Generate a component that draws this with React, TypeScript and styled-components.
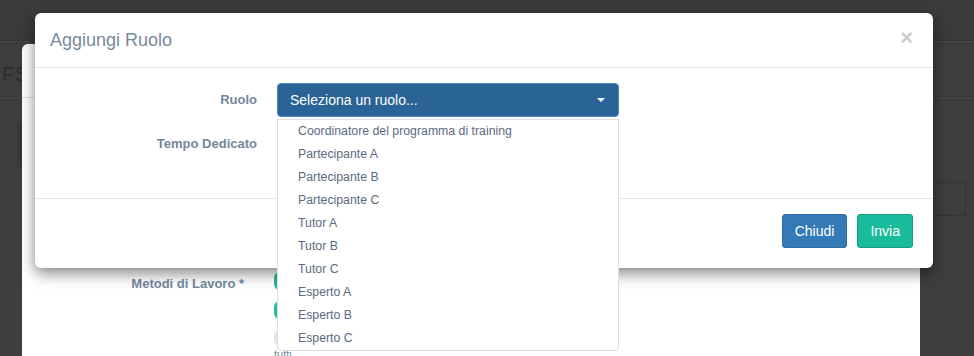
import React from "react";
import styled, { createGlobalStyle } from "styled-components";

const ruoli = [
  "Coordinatore del programma di training",
  "Partecipante A",
  "Partecipante B",
  "Partecipante C",
  "Tutor A",
  "Tutor B",
  "Tutor C",
  "Esperto A",
  "Esperto B",
  "Esperto C",
];

export default function App() {
  return (
    <>
      <GlobalStyle />
      <Stage>
        {/* pagina sotto il backdrop */}
        <PageTop />
        <PageTitleRow>
          <PageTitle>FSE</PageTitle>
        </PageTitleRow>
        <PageBlock>
          <SideBox />
          <RightBox />
        </PageBlock>
        <PageBottom />

        {/* modale dietro */}
        <BackModal>
          <BackHeader />
          <BackBody>
            <BackLabel>Metodi di Lavoro *</BackLabel>
            <PillList>
              <Pill $tone="green" />
              <Pill $tone="green" />
              <Pill $tone="grey" />
              <SmallText>tutti</SmallText>
            </PillList>
          </BackBody>
        </BackModal>

        {/* modale attivo */}
        <Modal>
          <ModalHeader>
            <ModalTitle>Aggiungi Ruolo</ModalTitle>
            <CloseButton>×</CloseButton>
          </ModalHeader>
          <ModalBody>
            <FormRow>
              <Label>Ruolo</Label>
              <SelectWrap>
                <SelectButton>
                  <span>Seleziona un ruolo...</span>
                  <Caret />
                </SelectButton>
                <Menu>
                  {ruoli.map((r) => (
                    <MenuItem key={r}>{r}</MenuItem>
                  ))}
                </Menu>
              </SelectWrap>
            </FormRow>
            <FormRow>
              <Label>Tempo Dedicato</Label>
            </FormRow>
          </ModalBody>
          <ModalFooter>
            <Button $variant="primary">Chiudi</Button>
            <Button $variant="success">Invia</Button>
          </ModalFooter>
        </Modal>
      </Stage>
    </>
  );
}

const GlobalStyle = createGlobalStyle`
  body {
    margin: 0;
    font-family: "Liberation Sans", Arial, sans-serif;
    background: #3e3e3e;
  }
`;

const Stage = styled.div`
  position: relative;
  width: 974px;
  height: 356px;
  overflow: hidden;
  background: #3e3e3e;
`;

// Pagina scurita
const PageTop = styled.div`
  height: 40px;
  border-bottom: 1px solid #363636;
  background: #3b3b3b;
`;

const PageTitleRow = styled.div`
  height: 56px;
  border-top: 1px solid #454545;
  border-bottom: 1px solid #4a4a4a;
  padding-left: 2px;
  display: flex;
  align-items: center;
`;

const PageTitle = styled.span`
  font-size: 21px;
  color: #2c2c2c;
  margin-top: 8px;
`;

const PageBlock = styled.div`
  height: 234px;
  border-top: 1px solid #363636;
  padding: 22px 8px 0 17px;
  display: flex;
  justify-content: space-between;
  align-items: flex-start;
`;

const SideBox = styled.div`
  width: 10px;
  height: 45px;
  background: #383838;
`;

const RightBox = styled.div`
  width: 45px;
  height: 32px;
  margin-top: 60px;
  border: 1px solid #353535;
`;

const PageBottom = styled.div`
  border-top: 1px solid #363636;
  height: 30px;
`;

// Modale dietro
const BackModal = styled.div`
  position: absolute;
  left: 22px;
  top: 44px;
  width: 898px;
  height: 340px;
  background: #fff;
  border-radius: 6px;
`;

const BackHeader = styled.div`
  height: 53px;
  border-bottom: 1px solid #e5e5e5;
`;

const BackBody = styled.div`
  padding-top: 174px;
  display: grid;
  grid-template-columns: 222px 1fr;
  column-gap: 30px;
`;

const BackLabel = styled.div`
  text-align: right;
  font-weight: bold;
  font-size: 13px;
  color: #73879c;
  padding-top: 4px;
`;

const PillList = styled.div`
  display: flex;
  flex-direction: column;
  gap: 11px;
`;

const Pill = styled.div<{ $tone: "green" | "grey" }>`
  width: 80px;
  height: ${(p) => (p.$tone === "grey" ? 16 : 18)}px;
  border-radius: 6px;
  background: ${(p) => (p.$tone === "green" ? "#26b99a" : "#e6e6e6")};
`;

const SmallText = styled.div`
  font-size: 11px;
  line-height: 11px;
  color: #73879c;
  margin-top: -8px;
`;

// Modale attivo
const Modal = styled.div`
  position: absolute;
  left: 35px;
  top: 13px;
  width: 898px;
  background: #fff;
  border-radius: 6px;
  box-shadow: 0 5px 15px rgba(0, 0, 0, 0.5);
`;

const ModalHeader = styled.div`
  height: 54px;
  padding: 0 20px 0 15px;
  border-bottom: 1px solid #e5e5e5;
  display: flex;
  align-items: center;
  justify-content: space-between;
`;

const ModalTitle = styled.h4`
  margin: 0;
  font-size: 18px;
  font-weight: normal;
  color: #7a8a9c;
`;

const CloseButton = styled.span`
  font-size: 22px;
  font-weight: bold;
  line-height: 1;
  color: #000;
  opacity: 0.2;
  margin-top: -4px;
`;

const ModalBody = styled.div`
  height: 130px;
  padding-top: 15px;
  box-sizing: border-box;
  display: flex;
  flex-direction: column;
  gap: 10px;
`;

const FormRow = styled.div`
  display: grid;
  grid-template-columns: 222px 342px;
  column-gap: 20px;
  align-items: start;
`;

const Label = styled.label`
  text-align: right;
  font-weight: bold;
  font-size: 13px;
  color: #73879c;
  line-height: 34px;
`;

const SelectWrap = styled.div`
  position: relative;
`;

const SelectButton = styled.div`
  height: 34px;
  box-sizing: border-box;
  padding: 0 12px;
  background: #2a6496;
  border: 1px solid #5287c0;
  border-radius: 4px;
  color: #fff;
  font-size: 14px;
  display: flex;
  align-items: center;
  justify-content: space-between;
`;

const Caret = styled.span`
  width: 0;
  height: 0;
  border-left: 4px solid transparent;
  border-right: 4px solid transparent;
  border-top: 4px solid #fff;
  margin-right: 1px;
`;

const Menu = styled.ul`
  position: absolute;
  top: 36px;
  left: 0;
  right: 0;
  margin: 0;
  padding: 0;
  list-style: none;
  background: #fff;
  border: 1px solid #d9dee4;
  border-radius: 0 0 4px 4px;
  z-index: 2;
`;

const MenuItem = styled.li`
  height: 23px;
  line-height: 23px;
  padding-left: 20px;
  font-size: 12.3px;
  color: #5a6b80;
`;

const ModalFooter = styled.div`
  border-top: 1px solid #e5e5e5;
  padding: 15px 20px 20px;
  display: flex;
  justify-content: flex-end;
  gap: 10px;
`;

const Button = styled.button<{ $variant: "primary" | "success" }>`
  height: 34px;
  padding: 0 12px;
  font-family: inherit;
  font-size: 14px;
  color: #fff;
  border-radius: 3px;
  border: 1px solid
    ${(p) => (p.$variant === "primary" ? "#2e6da4" : "#169f85")};
  background: ${(p) => (p.$variant === "primary" ? "#337ab7" : "#1abb9c")};
`;
